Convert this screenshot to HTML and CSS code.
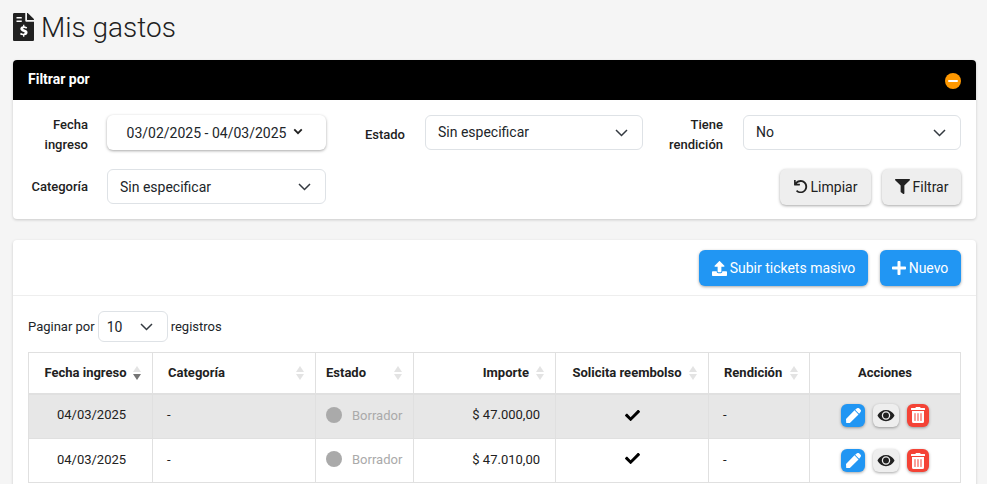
FILE: index.html
```html
<!DOCTYPE html>
<html lang="es">
<head>
<meta charset="utf-8">
<title>Mis gastos</title>
<link rel="stylesheet" href="styles.css">
</head>
<body>
<main class="page">
  <h1 class="title">
    <svg class="title-icon" viewBox="0 0 384 512" aria-hidden="true"><path fill="#212121" d="M377 105 279 7c-4.500-4.500-10.600-7-17-7H256v128h128v-6.100c0-6.300-2.500-12.400-7-16.900z"/><path fill="#212121" d="M224 136V0H24C10.700 0 0 10.700 0 24v464c0 13.300 10.700 24 24 24h336c13.300 0 24-10.700 24-24V160H248c-13.200 0-24-10.800-24-24z"/><path fill="#fff" d="M64 72h96v28H64zM64 136h96v28H64z"/><path fill="#fff" d="M208 217v24c22 2 40 11 52 19l-16 27c-12-8-25-14-38-15-13 0-21 4-21 12 0 9 9 13 27 19 28 9 54 21 54 54 0 29-21 48-58 52v25h-24v-25c-23-2-43-11-57-22l18-27c14 10 28 17 43 18 16 1 26-5 26-15s-9-15-30-22c-26-9-50-20-50-51 0-27 20-45 50-49v-24z"/></svg>
    <span>Mis gastos</span>
  </h1>

  <section class="card filter">
    <header class="filter-head">
      <span>Filtrar por</span>
      <span class="collapse"><i></i></span>
    </header>
    <div class="filter-body">
      <div class="filter-row first">
        <label class="lbl lbl-a">Fecha ingreso</label>
        <button class="date-btn">03/02/2025 - 04/03/2025
          <svg class="mini-chev" viewBox="0 0 12 8"><path d="M1.500 1.500 6 6l4.500-4.500" fill="none" stroke="#212121" stroke-width="2.200"/></svg>
        </button>
        <label class="lbl lbl-b">Estado</label>
        <div class="select sel-b"><span>Sin especificar</span><svg class="chev" viewBox="0 0 13 8"><path d="M1 1l5.500 5.500L12 1" fill="none" stroke="#343a40" stroke-width="1.500"/></svg></div>
        <label class="lbl lbl-c">Tiene rendición</label>
        <div class="select sel-c"><span>No</span><svg class="chev" viewBox="0 0 13 8"><path d="M1 1l5.500 5.500L12 1" fill="none" stroke="#343a40" stroke-width="1.500"/></svg></div>
      </div>
      <div class="filter-row second">
        <label class="lbl lbl-a">Categoría</label>
        <div class="select sel-a"><span>Sin especificar</span><svg class="chev" viewBox="0 0 13 8"><path d="M1 1l5.500 5.500L12 1" fill="none" stroke="#343a40" stroke-width="1.500"/></svg></div>
        <div class="filter-actions">
          <button class="btn btn-light">
            <svg class="ico" viewBox="0 0 512 512"><path fill="#212121" d="M48 32h32c6 0 12 5 12 12v70C134 66 196 36 264 36c124 0 222 101 220 225-2 121-101 219-224 219-57 0-110-22-150-57-5-5-5-12 0-17l23-23c4-4 11-5 16-1 30 26 69 42 111 42 90 0 160-73 160-163S350 100 260 100c-52 0-97 24-126 64h90c7 0 12 5 12 12v32c0 6-5 12-12 12H48c-7 0-12-6-12-12V44c0-7 5-12 12-12z"/></svg>
            Limpiar
          </button>
          <button class="btn btn-light">
            <svg class="ico" viewBox="0 0 512 512"><path fill="#212121" d="M488 0H24C3 0-8 26 7 41l185 185v206c0 8 4 15 10 20l80 56c16 11 38 0 38-20V226L505 41c15-15 4-41-17-41z"/></svg>
            Filtrar
          </button>
        </div>
      </div>
    </div>
  </section>

  <section class="card list">
    <div class="toolbar">
      <button class="btn btn-blue">
        <svg class="ico ico-up" viewBox="0 0 512 512"><path fill="#fff" d="M296 384h-80c-13 0-24-11-24-24V192h-88c-18 0-27-21-14-34L242 7c8-9 21-9 28 0l152 151c13 13 4 34-14 34h-88v168c0 13-11 24-24 24z"/><path fill="#fff" d="M512 376v112c0 13-11 24-24 24H24c-13 0-24-11-24-24V376c0-13 11-24 24-24h136v8c0 31 25 56 56 56h80c31 0 56-25 56-56v-8h136c13 0 24 11 24 24z"/></svg>
        Subir tickets masivo
      </button>
      <button class="btn btn-blue">
        <svg class="ico ico-plus" viewBox="0 0 448 448"><path fill="#fff" d="M416 176H272V32c0-18-14-32-32-32h-32c-18 0-32 14-32 32v144H32c-18 0-32 14-32 32v32c0 18 14 32 32 32h144v144c0 18 14 32 32 32h32c18 0 32-14 32-32V272h144c18 0 32-14 32-32v-32c0-18-14-32-32-32z"/></svg>
        Nuevo
      </button>
    </div>
    <div class="list-body">
      <div class="pager">
        <span>Paginar por</span>
        <div class="select sel-page"><span>10</span><svg class="chev" viewBox="0 0 13 8"><path d="M1 1l5.500 5.500L12 1" fill="none" stroke="#343a40" stroke-width="1.500"/></svg></div>
        <span>registros</span>
      </div>
      <table class="grid">
        <colgroup><col class="c1"><col class="c2"><col class="c3"><col class="c4"><col class="c5"><col class="c6"><col class="c7"></colgroup>
        <thead>
          <tr>
            <th class="center sort sort-desc">Fecha ingreso</th>
            <th class="pad-l sort">Categoría</th>
            <th class="sort">Estado</th>
            <th class="right sort">Importe</th>
            <th class="center sort">Solicita reembolso</th>
            <th class="pad-m sort">Rendición</th>
            <th class="center">Acciones</th>
          </tr>
        </thead>
        <tbody>
          <tr class="selected">
            <td class="center date">04/03/2025</td>
            <td class="dash">-</td>
            <td><span class="status"><i></i>Borrador</span></td>
            <td class="right">$ 47.000,00</td>
            <td class="center"><svg class="check" viewBox="0 0 512 512"><path fill="#000" d="M174 439 7 272c-10-10-10-26 0-36l36-36c10-10 26-10 36 0l113 112L433 72c10-10 26-10 36 0l36 36c10 10 10 26 0 36L210 439c-10 10-26 10-36 0z"/></svg></td>
            <td class="dash">-</td>
            <td><div class="acts">
              <span class="act act-blue"><svg viewBox="0 0 512 512"><path fill="#fff" d="M290 85 427 222 129 520 7 512 0 383zM497 65l-50-50c-20-20-52-20-72 0l-63 49 136 136 49-63c20-20 20-52 0-72z" transform="translate(0 -4)"/></svg></span>
              <span class="act act-grey"><svg class="eye" viewBox="0 0 576 512"><path fill="#212121" fill-rule="evenodd" d="M572 241C518 135 410 64 288 64S58 135 4 241a32 32 0 0 0 0 29c54 106 162 178 284 178s230-72 284-178a32 32 0 0 0 0-29zM288 400a144 144 0 1 1 0-288 144 144 0 0 1 0 288z"/><circle cx="288" cy="256" r="100" fill="#212121"/></svg></span>
              <span class="act act-red"><svg viewBox="0 0 448 512"><path fill="#fff" d="M32 464a48 48 0 0 0 48 48h288a48 48 0 0 0 48-48V128H32zm272-256a16 16 0 0 1 32 0v224a16 16 0 0 1-32 0zm-96 0a16 16 0 0 1 32 0v224a16 16 0 0 1-32 0zm-96 0a16 16 0 0 1 32 0v224a16 16 0 0 1-32 0zM432 32H312l-9-19a24 24 0 0 0-22-13H167a24 24 0 0 0-21 13l-9 19H16A16 16 0 0 0 0 48v32a16 16 0 0 0 16 16h416a16 16 0 0 0 16-16V48a16 16 0 0 0-16-16z"/></svg></span>
            </div></td>
          </tr>
          <tr class="plain">
            <td class="center date">04/03/2025</td>
            <td class="dash">-</td>
            <td><span class="status"><i></i>Borrador</span></td>
            <td class="right">$ 47.010,00</td>
            <td class="center"><svg class="check" viewBox="0 0 512 512"><path fill="#000" d="M174 439 7 272c-10-10-10-26 0-36l36-36c10-10 26-10 36 0l113 112L433 72c10-10 26-10 36 0l36 36c10 10 10 26 0 36L210 439c-10 10-26 10-36 0z"/></svg></td>
            <td class="dash">-</td>
            <td><div class="acts">
              <span class="act act-blue"><svg viewBox="0 0 512 512"><path fill="#fff" d="M290 85 427 222 129 520 7 512 0 383zM497 65l-50-50c-20-20-52-20-72 0l-63 49 136 136 49-63c20-20 20-52 0-72z" transform="translate(0 -4)"/></svg></span>
              <span class="act act-grey"><svg class="eye" viewBox="0 0 576 512"><path fill="#212121" fill-rule="evenodd" d="M572 241C518 135 410 64 288 64S58 135 4 241a32 32 0 0 0 0 29c54 106 162 178 284 178s230-72 284-178a32 32 0 0 0 0-29zM288 400a144 144 0 1 1 0-288 144 144 0 0 1 0 288z"/><circle cx="288" cy="256" r="100" fill="#212121"/></svg></span>
              <span class="act act-red"><svg viewBox="0 0 448 512"><path fill="#fff" d="M32 464a48 48 0 0 0 48 48h288a48 48 0 0 0 48-48V128H32zm272-256a16 16 0 0 1 32 0v224a16 16 0 0 1-32 0zm-96 0a16 16 0 0 1 32 0v224a16 16 0 0 1-32 0zm-96 0a16 16 0 0 1 32 0v224a16 16 0 0 1-32 0zM432 32H312l-9-19a24 24 0 0 0-22-13H167a24 24 0 0 0-21 13l-9 19H16A16 16 0 0 0 0 48v32a16 16 0 0 0 16 16h416a16 16 0 0 0 16-16V48a16 16 0 0 0-16-16z"/></svg></span>
            </div></td>
          </tr>
        </tbody>
      </table>
    </div>
  </section>
</main>
</body>
</html>
```

FILE: styles.css
```css
* { box-sizing: border-box; }
html, body { height: 100%; }
body {
  margin: 0;
  background: #f5f5f5;
  font-family: Roboto, "Liberation Sans", sans-serif;
  font-size: 14px;
  color: #212121;
  overflow: hidden;
}
.page { padding: 0 11px 0 13px; }

.title {
  display: flex;
  align-items: center;
  gap: 7px;
  height: 60px;
  margin: 0;
  padding-bottom: 6px;
  font-size: 28px;
  font-weight: 300;
  color: #212121;
}
.title-icon { width: 21px; height: 28px; flex: none; }

.card {
  background: #fff;
  border-radius: 4px;
  box-shadow: 0 1px 3px rgba(0, 0, 0, .18);
}

.filter-head {
  display: flex;
  justify-content: space-between;
  align-items: center;
  height: 40px;
  padding: 0 15px;
  background: #000;
  border-radius: 4px 4px 0 0;
  color: #fff;
  font-weight: 700;
  font-size: 14px;
}
.filter-head > span:first-child { margin-top: -3px; }
.collapse {
  width: 16px;
  height: 16px;
  border-radius: 50%;
  background: #ff9800;
  display: flex;
  align-items: center;
  justify-content: center;
  margin-top: 2px;
}
.collapse i { width: 10px; height: 2.500px; background: #fff; border-radius: 1px; }

.filter-body { padding: 15px; height: 119px; }
.filter-row { display: flex; align-items: center; height: 35px; }
.filter-row.second { margin-top: 19px; }

.lbl {
  flex: none;
  font-weight: 500;
  font-size: 13px;
  line-height: 20px;
  text-align: right;
  color: #212121;
}
.first .lbl { padding-top: 4px; }
.lbl-a { width: 60px; margin-right: 19px; }
.lbl-b { width: 79px; margin-right: 20px; }
.lbl-c { width: 80px; margin-right: 20px; }

.select {
  flex: none;
  display: flex;
  align-items: center;
  justify-content: space-between;
  height: 35px;
  border: 1px solid #dee2e6;
  border-radius: 6px;
  background: #fff;
  padding: 0 14px 0 12px;
  font-size: 14px;
  color: #212529;
}
.first .select { padding-bottom: 2px; }
.first .select .chev { margin-top: 2px; }
.sel-a { width: 219px; }
.sel-b { width: 218px; }
.sel-c { width: 218px; }
.chev { width: 13px; height: 8px; }

.date-btn {
  flex: none;
  display: flex;
  align-items: center;
  justify-content: center;
  gap: 7px;
  width: 219px;
  height: 35px;
  border: 0;
  border-radius: 6px;
  background: #fff;
  box-shadow: 0 1px 3px rgba(0, 0, 0, .35);
  font: 400 14px Roboto, sans-serif;
  color: #212529;
  padding: 0 3px 0 0;
}
.mini-chev { width: 10px; height: 7px; margin-top: -2px; }

.filter-actions { display: flex; gap: 11px; margin-left: auto; }
.btn {
  display: inline-flex;
  align-items: center;
  justify-content: center;
  gap: 3px;
  height: 36px;
  border: 0;
  border-radius: 6px;
  font: 400 14px Roboto, sans-serif;
  padding: 0;
  box-shadow: 0 1px 3px rgba(0, 0, 0, .35);
}
.btn-light { background: #eee; color: #212121; }
.btn-light:first-child { width: 91px; padding-right: 1px; }
.btn-light:last-child { width: 79px; }
.btn-blue { background: #2196f3; color: #fff; }
.ico { width: 15px; height: 15px; }
.ico-up { width: 15px; height: 15px; }
.ico-plus { width: 14px; height: 14px; }

.list { margin-top: 21px; border-radius: 4px 4px 0 0; }
.toolbar {
  display: flex;
  justify-content: flex-end;
  gap: 12px;
  height: 56px;
  padding: 10px 15px;
  border-bottom: 1px solid #eee;
}
.toolbar .btn:first-child { width: 169px; }
.toolbar .btn:last-child { width: 81px; padding-right: 1px; }

.list-body { padding: 15px 15px 0; height: 190px; }
.pager { display: flex; align-items: center; gap: 3px; height: 31px; font-size: 13px; color: #212529; }
.sel-page { width: 70px; height: 31px; padding: 0 14px 0 8px; font-size: 14px; }

.grid {
  width: 932px;
  margin-top: 10px;
  border-collapse: collapse;
  table-layout: fixed;
  font-size: 13px;
  color: #212121;
}
.c1 { width: 124px; }
.c2 { width: 163px; }
.c3 { width: 98px; }
.c4 { width: 142px; }
.c5 { width: 153px; }
.c6 { width: 101px; }
.c7 { width: 151px; }
.grid th, .grid td { border: 1px solid #e0e0e0; padding: 0 10px; }
.grid th {
  height: 41px;
  font-weight: 700;
  font-size: 13px;
  text-align: left;
  border-bottom-width: 2px;
  position: relative;
}
.grid td { height: 44px; }
.grid .selected td { height: 45px; padding-bottom: 4px; }
.grid .plain td { padding-bottom: 3px; }
.grid th.center, .grid td.center { text-align: center; }
.grid th.right, .grid td.right { text-align: right; }
.grid th.pad-l, .grid th.pad-m { padding-left: 15px; }
.grid td.dash { padding-left: 14px; }
.grid th.right { padding-right: 26px; }
.grid td.right { padding-right: 15px; }
.grid th.sort.center { padding: 0 10px 0 0; }
.grid td.date { padding-left: 11px; padding-right: 9px; }

.sort::before, .sort::after {
  content: "";
  position: absolute;
  right: 11px;
  width: 0;
  height: 0;
  border-left: 4px solid transparent;
  border-right: 4px solid transparent;
}
.sort::before { top: 13px; border-bottom: 6px solid #e3e3e3; }
.sort::after { top: 21px; border-top: 6px solid #e3e3e3; }
.sort-desc::after { border-top-color: #757575; }

.selected td { background: #e7e7e7; }

.status { display: flex; align-items: center; gap: 10px; color: #aaa; }
.selected .status { margin-top: 2px; }
.plain .status { margin-top: 1px; }
.status i { width: 16px; height: 16px; border-radius: 50%; background: #aaa; margin-top: -1px; }

.check { width: 15px; height: 15px; display: block; margin: 0 auto; }
.selected .check { margin-top: 2px; }
.plain .check { margin-top: -2px; }

.acts { display: flex; justify-content: center; gap: 8px; }
.selected .acts { margin-top: 2px; }
.plain .acts { margin-top: 3px; }
.act {
  display: flex;
  align-items: center;
  justify-content: center;
  height: 23px;
  border-radius: 6px;
  box-shadow: 0 1px 3px rgba(0, 0, 0, .35);
}
.act svg { width: 15px; height: 15px; }
.act-blue { width: 24px; background: #2196f3; }
.act-grey { width: 26px; background: #eee; }
.act-red { width: 22px; background: #f44336; }
.act-red svg { width: 14px; height: 16px; }
.act-grey .eye { width: 18px; height: 15px; }
```
